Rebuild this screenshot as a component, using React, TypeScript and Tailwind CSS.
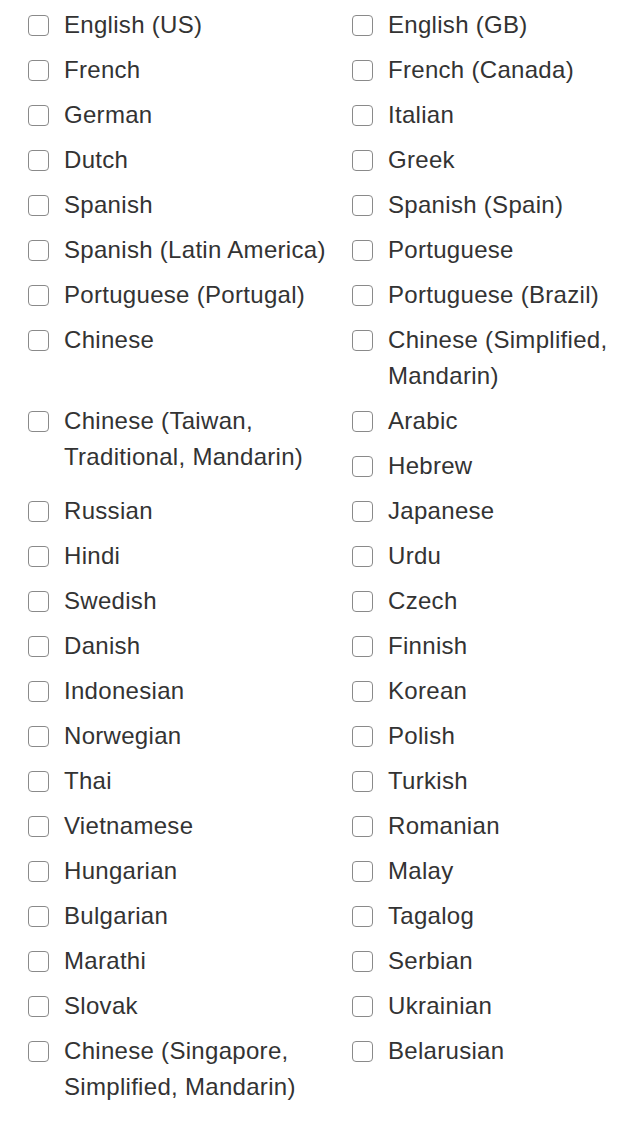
import React from "react";

const rows: [string[], string[]][] = [
  [["English (US)"], ["English (GB)"]],
  [["French"], ["French (Canada)"]],
  [["German"], ["Italian"]],
  [["Dutch"], ["Greek"]],
  [["Spanish"], ["Spanish (Spain)"]],
  [["Spanish (Latin America)"], ["Portuguese"]],
  [["Portuguese (Portugal)"], ["Portuguese (Brazil)"]],
  [["Chinese"], ["Chinese (Simplified, Mandarin)"]],
  [["Chinese (Taiwan, Traditional, Mandarin)"], ["Arabic", "Hebrew"]],
  [["Russian"], ["Japanese"]],
  [["Hindi"], ["Urdu"]],
  [["Swedish"], ["Czech"]],
  [["Danish"], ["Finnish"]],
  [["Indonesian"], ["Korean"]],
  [["Norwegian"], ["Polish"]],
  [["Thai"], ["Turkish"]],
  [["Vietnamese"], ["Romanian"]],
  [["Hungarian"], ["Malay"]],
  [["Bulgarian"], ["Tagalog"]],
  [["Marathi"], ["Serbian"]],
  [["Slovak"], ["Ukrainian"]],
  [["Chinese (Singapore, Simplified, Mandarin)"], ["Belarusian"]],
];

function Item({ label }: { label: string }) {
  return (
    <label className="flex items-start">
      <span className="mt-[7.5px] h-[21px] w-[21px] shrink-0 rounded-[4px] border-[1.5px] border-[#8a8a8a] bg-white" />
      <span className="ml-[15px] text-[24px] leading-[36px] tracking-[0.3px] text-[#333333]">{label}</span>
    </label>
  );
}

export default function App() {
  return (
    <div
      className="min-h-[1123px] w-[623px] bg-white pl-[28px] pr-[8px] pt-[7px]"
      style={{ fontFamily: '"Liberation Sans", Arial, Helvetica, sans-serif' }}
    >
      <div className="grid grid-cols-[324px_1fr] gap-y-[9px]">
        {rows.map((r, i) => (
          <React.Fragment key={i}>
            <div className="flex flex-col gap-[9px] pr-[8px]">
              {r[0].map((l) => (
                <Item key={l} label={l} />
              ))}
            </div>
            <div className="flex flex-col gap-[9px]">
              {r[1].map((l) => (
                <Item key={l} label={l} />
              ))}
            </div>
          </React.Fragment>
        ))}
      </div>
    </div>
  );
}
